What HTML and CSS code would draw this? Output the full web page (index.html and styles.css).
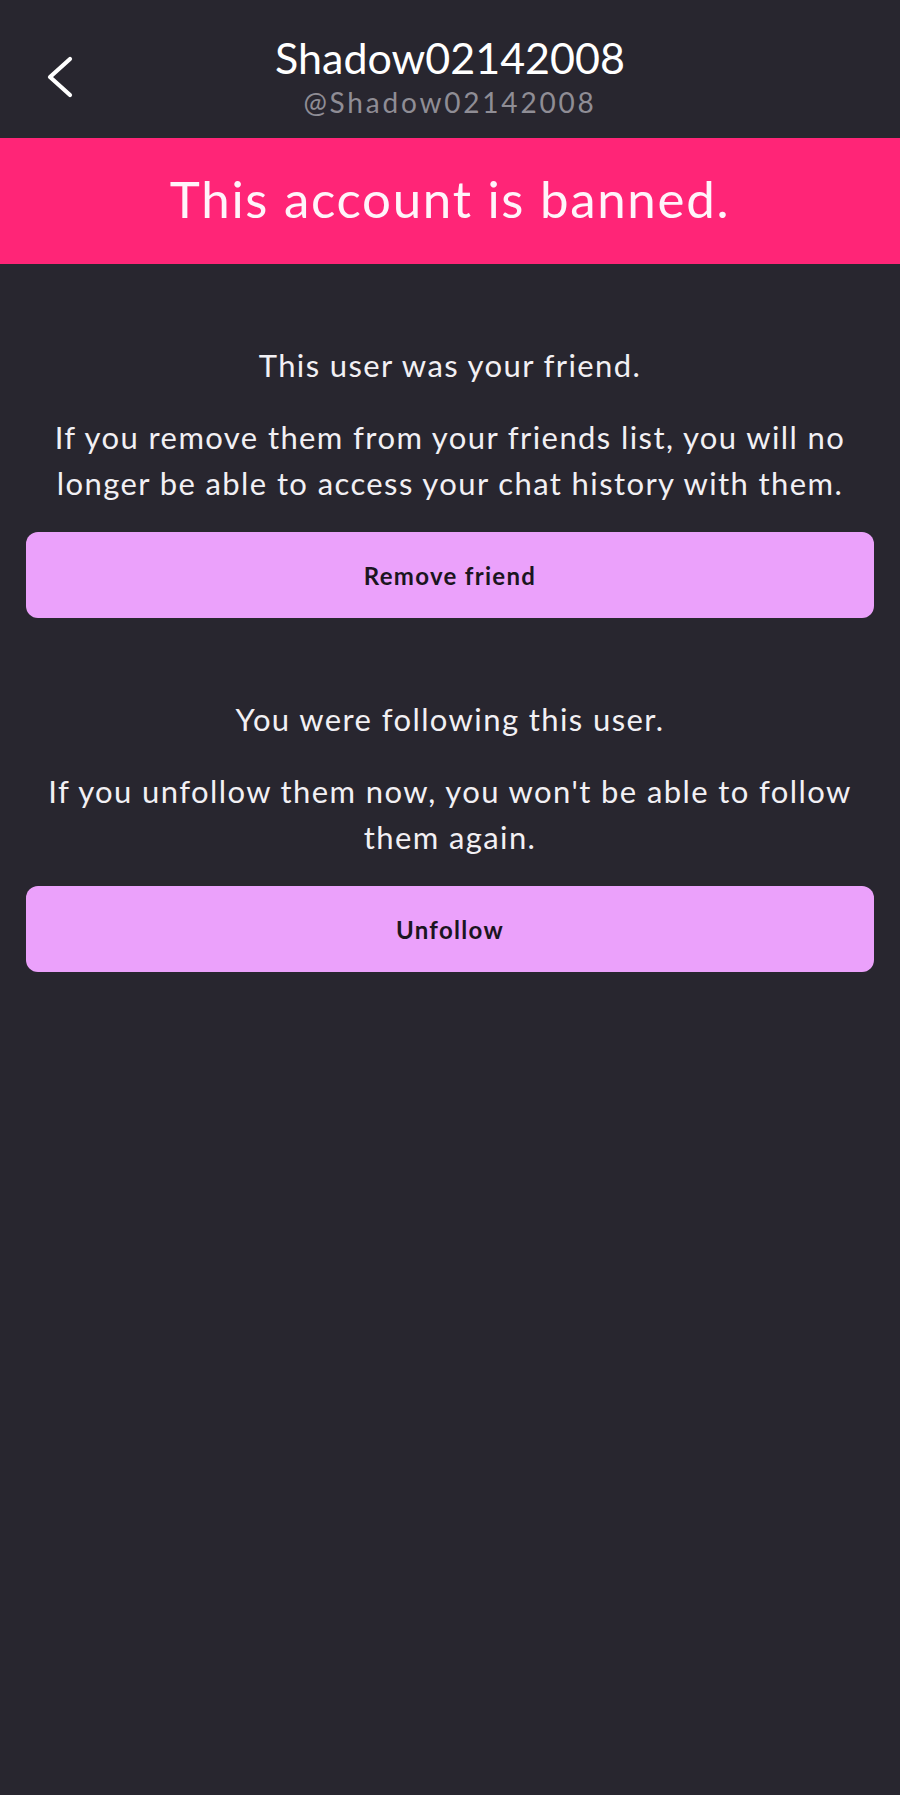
FILE: index.html
```html
<!DOCTYPE html>
<html lang="en">
<head>
<meta charset="utf-8">
<title>Shadow02142008</title>
<link rel="stylesheet" href="styles.css">
</head>
<body>
<div class="screen">
  <header class="topbar">
    <div class="back">
      <svg width="26" height="44" viewBox="0 0 26 44" aria-hidden="true">
        <polyline points="23,3 3,21 23,39" fill="none" stroke="#ffffff" stroke-width="4.2" stroke-linecap="round" stroke-linejoin="round"/>
      </svg>
    </div>
    <div class="names">
      <div class="title">Shadow02142008</div>
      <div class="handle">@Shadow02142008</div>
    </div>
    <div class="spacer"></div>
  </header>
  <div class="banner">This account is banned.</div>
  <main class="content">
    <section class="block block-first">
      <p class="lead">This user was your friend.</p>
      <p class="desc">If you remove them from your friends list, you will no longer be able to access your chat history with them.</p>
      <button class="action">Remove friend</button>
    </section>
    <section class="block">
      <p class="lead">You were following this user.</p>
      <p class="desc">If you unfollow them now, you won't be able to follow them again.</p>
      <button class="action">Unfollow</button>
    </section>
  </main>
</div>
</body>
</html>
```
FILE: styles.css
```css
html, body {
  margin: 0;
  padding: 0;
  background: #28262f;
}
body {
  font-family: "Lato", "Open Sans", sans-serif;
  color: #f2f0f4;
}
.screen {
  width: 900px;
  min-height: 1795px;
  background: #28262f;
}
.topbar {
  height: 138px;
  display: grid;
  grid-template-columns: 1fr auto 1fr;
  align-items: start;
}
.back {
  padding-top: 56px;
  padding-left: 47px;
  height: 44px;
}
.back svg {
  display: block;
}
.names {
  text-align: center;
  padding-top: 33px;
}
.title {
  font-size: 43px;
  line-height: 50px;
  color: #ffffff;
}
.handle {
  font-size: 28px;
  line-height: 38px;
  color: #8f8d95;
  letter-spacing: 2.8px;
}
.banner {
  box-sizing: border-box;
  height: 126px;
  padding-bottom: 5px;
  background: #ff2577;
  color: #fff4fa;
  display: flex;
  align-items: center;
  justify-content: center;
  font-size: 51px;
  line-height: 61px;
  letter-spacing: 1.7px;
}
.content {
  padding: 0 26px;
}
.block {
  display: flex;
  flex-direction: column;
  align-items: stretch;
  padding-top: 78px;
}
.lead, .desc {
  margin: 0;
  text-align: center;
  font-size: 31px;
  line-height: 46px;
  letter-spacing: 1.4px;
}
.desc {
  margin-top: 26px;
}
.action {
  margin-top: 26px;
  height: 86px;
  border: none;
  border-radius: 12px;
  background: #eba1fb;
  color: #1b1520;
  font-family: "Lato", sans-serif;
  font-weight: 700;
  font-size: 24px;
  letter-spacing: 1.3px;
  cursor: pointer;
}
```
